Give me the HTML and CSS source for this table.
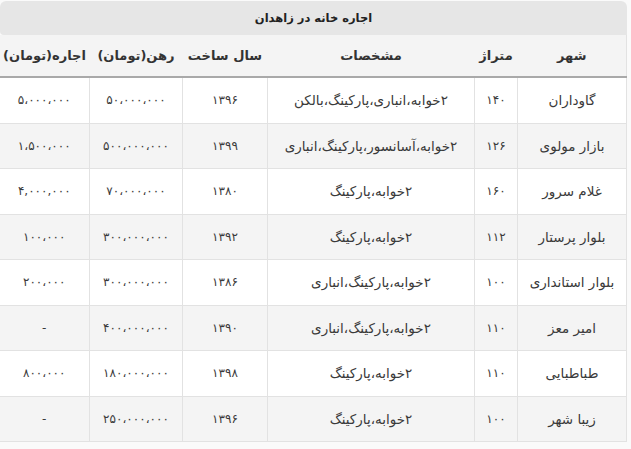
FILE: index.html
```html
<!DOCTYPE html>
<html lang="fa">
<head>
<meta charset="utf-8">
<title>اجاره خانه در زاهدان</title>
<link rel="stylesheet" href="styles.css">
</head>
<body>
<div class="wrap" dir="rtl">
  <div class="caption">اجاره خانه در زاهدان</div>
  <table class="grid">
    <colgroup>
      <col class="c-city"><col class="c-area"><col class="c-spec"><col class="c-year"><col class="c-rahn"><col class="c-rent">
    </colgroup>
    <thead>
      <tr><th>شهر</th><th>متراژ</th><th>مشخصات</th><th>سال ساخت</th><th>رهن(تومان)</th><th>اجاره(تومان)</th></tr>
    </thead>
    <tbody>
      <tr><td class="t">گاوداران</td><td>۱۴۰</td><td class="t">۲خوابه،انباری،پارکینگ،بالکن</td><td>۱۳۹۶</td><td>۵۰،۰۰۰،۰۰۰</td><td>۵،۰۰۰،۰۰۰</td></tr>
      <tr><td class="t">بازار مولوی</td><td>۱۲۶</td><td class="t">۲خوابه،آسانسور،پارکینگ،انباری</td><td>۱۳۹۹</td><td>۵۰۰،۰۰۰،۰۰۰</td><td>۱،۵۰۰،۰۰۰</td></tr>
      <tr><td class="t">غلام سرور</td><td>۱۶۰</td><td class="t">۲خوابه،پارکینگ</td><td>۱۳۸۰</td><td>۷۰،۰۰۰،۰۰۰</td><td>۴,۰۰۰,۰۰۰</td></tr>
      <tr><td class="t">بلوار پرستار</td><td>۱۱۲</td><td class="t">۲خوابه،پارکینگ</td><td>۱۳۹۲</td><td>۳۰۰،۰۰۰،۰۰۰</td><td>۱۰۰،۰۰۰</td></tr>
      <tr><td class="t">بلوار استانداری</td><td>۱۰۰</td><td class="t">۲خوابه،پارکینگ،انباری</td><td>۱۳۸۶</td><td>۳۰۰،۰۰۰،۰۰۰</td><td>۲۰۰،۰۰۰</td></tr>
      <tr><td class="t">امیر معز</td><td>۱۱۰</td><td class="t">۲خوابه،پارکینگ،انباری</td><td>۱۳۹۰</td><td>۴۰۰،۰۰۰،۰۰۰</td><td>-</td></tr>
      <tr><td class="t">طباطبایی</td><td>۱۱۰</td><td class="t">۲خوابه،پارکینگ</td><td>۱۳۹۸</td><td>۱۸۰،۰۰۰،۰۰۰</td><td>۸۰۰،۰۰۰</td></tr>
      <tr><td class="t">زیبا شهر</td><td>۱۰۰</td><td class="t">۲خوابه،پارکینگ</td><td>۱۳۹۶</td><td>۲۵۰،۰۰۰،۰۰۰</td><td>-</td></tr>
    </tbody>
  </table>
</div>
</body>
</html>
```
FILE: styles.css
```css
html, body {
  margin: 0;
  padding: 0;
  background: #fafafa;
}
body {
  font-family: "DejaVu Sans", sans-serif;
  color: #3a3a3a;
}
.wrap {
  width: 627px;
  padding-top: 1px;
}
.caption {
  height: 34px;
  line-height: 34px;
  background: #e6e6e6;
  border-radius: 6px 6px 0 4px;
  text-align: center;
  font-size: 11.5px;
  font-weight: bold;
  color: #222;
}
.grid {
  width: 627px;
  border-collapse: collapse;
  table-layout: fixed;
  background: #fff;
}
.c-city { width: 109px; }
.c-area { width: 43px; }
.c-spec { width: 207px; }
.c-year { width: 85px; }
.c-rahn { width: 93px; }
.c-rent { width: 90px; }
.grid th {
  height: 41px;
  background: #f4f4f4;
  font-size: 13px;
  font-weight: bold;
  color: #333;
  border-bottom: 2px solid #a9a9a9;
  padding: 0;
  text-align: center;
}
.grid th:first-child { border-right: 1px solid #e2e2e2; }
.grid td {
  height: 44.5px;
  padding: 0;
  text-align: center;
  font-size: 12px;
  border: 1px solid #e2e2e2;
  white-space: nowrap;
  overflow: hidden;
}
.grid td.t { font-size: 13.5px; }
.grid td:last-child { border-left: none; }
.grid tbody tr:nth-child(even) td { background: #f4f4f4; }
```
